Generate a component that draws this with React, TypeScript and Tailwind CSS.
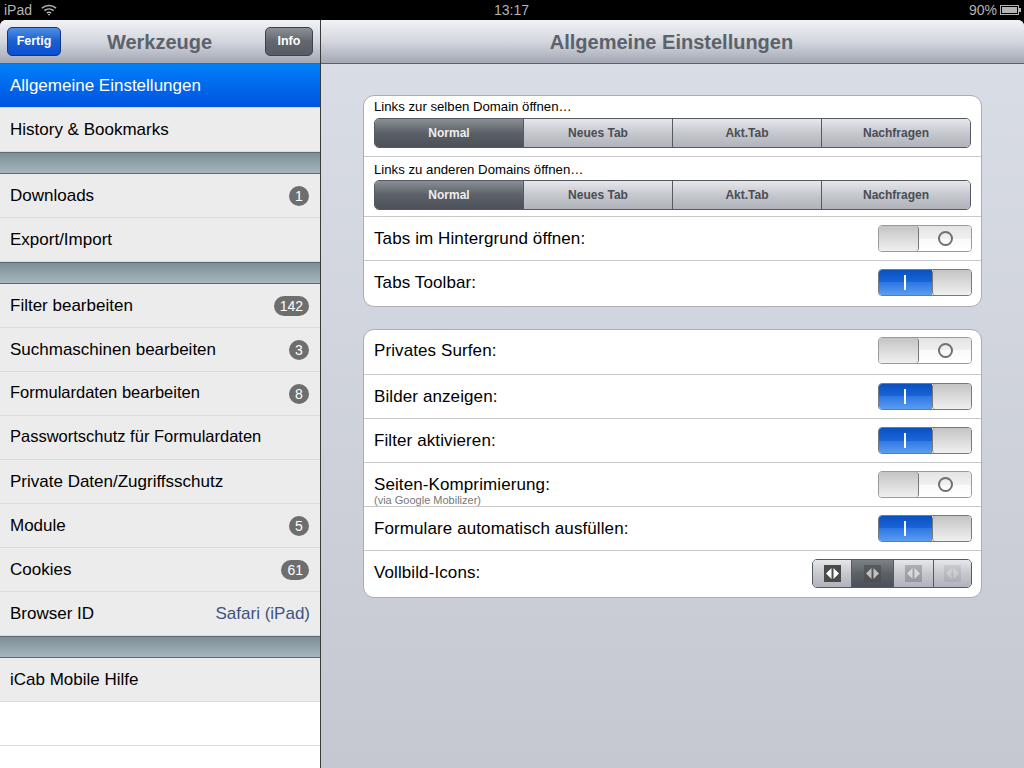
import React from 'react';

const navBg = 'bg-[linear-gradient(#f2f3f6,#d3d6dd_50%,#a3a8b4)]';

function Wifi() {
  return (
    <svg width="16" height="12" viewBox="0 0 16 12" fill="none" stroke="#b4b4b4" strokeWidth="1.6">
      <path d="M1 4.2C5 .6 11 .6 15 4.2" />
      <path d="M3.4 6.7c2.7-2.3 6.5-2.3 9.2 0" />
      <path d="M5.9 9c1.3-.9 2.9-.9 4.2 0" />
      <path d="M8 11.8 6.8 10.3c.7-.4 1.7-.4 2.4 0z" fill="#b4b4b4" stroke="none" />
    </svg>
  );
}

function Battery() {
  return (
    <svg width="21" height="10" viewBox="0 0 21 10">
      <rect x="0.5" y="0.5" width="18" height="9" fill="none" stroke="#b4b4b4" />
      <rect x="2" y="2" width="15" height="6" fill="#b4b4b4" />
      <rect x="19" y="3" width="2" height="4" fill="#b4b4b4" />
    </svg>
  );
}

function StatusBar() {
  return (
    <div className="h-5 bg-black text-[#b4b4b4] text-[14px] leading-5 grid grid-cols-3 pl-1 pr-[3px]">
      <div className="flex items-center gap-[9px]">
        <span>iPad</span>
        <Wifi />
      </div>
      <div className="text-center pr-[2px]">13:17</div>
      <div className="flex items-center justify-end gap-[3px]">
        <span>90%</span>
        <Battery />
      </div>
    </div>
  );
}

type RowProps = { label?: string; badge?: string; value?: string; selected?: boolean; plain?: boolean; tight?: boolean };

function Row({ label, badge, value, selected, plain, tight }: RowProps) {
  return (
    <div
      className={`h-11 shrink-0 flex items-center justify-between pl-2.5 pr-2.5 border-b text-[17px] ${
        selected
          ? 'bg-[linear-gradient(#0180f8,#0052e0)] text-white border-[#d8d8d8]'
          : plain
            ? 'bg-white border-[#dcdcdc] text-black'
            : 'bg-[#ececec] border-[#dcdcdc] text-black'
      }`}
    >
      <span className={tight ? 'text-[16.5px] -mt-0.5' : ''}>{label}</span>
      {badge && (
        <span className="h-5 min-w-5 px-1.5 rounded-full bg-[#6e6e6e] text-white text-[14px] leading-5 text-center mr-px">{badge}</span>
      )}
      {value && <span className="text-[#3d5380]">{value}</span>}
    </div>
  );
}

function Section() {
  return <div className="h-[22px] shrink-0 border-y border-y-[#5e6a72] bg-[linear-gradient(#7d8e99,#a8b6bd)]" />;
}

function NavButton({ label, blue }: { label: string; blue?: boolean }) {
  return (
    <button
      className={`h-[29px] rounded-[5px] border text-white text-[12.5px] font-bold ${
        blue
          ? 'w-[54px] border-[#12377c] bg-[linear-gradient(#4f8ee6,#1a5ed0_50%,#0a4fd0)]'
          : 'w-12 border-[#3f444c] bg-[linear-gradient(#8b9097,#62676f_50%,#565b64)]'
      }`}
    >
      {label}
    </button>
  );
}

function Segmented({ selected = 0 }: { selected?: number }) {
  const items = ['Normal', 'Neues Tab', 'Akt.Tab', 'Nachfragen'];
  return (
    <div className="h-[30px] flex rounded-[5px] border border-[#555a62] overflow-hidden text-[12px] font-bold">
      {items.map((item, i) => (
        <div
          key={item}
          className={`flex-1 flex items-center justify-center ${i > 0 ? 'border-l border-l-[#555a62]' : ''} ${
            i === selected
              ? 'bg-[linear-gradient(#8a8f95,#5c6168_50%,#4c5159)] text-[#eeeeee]'
              : 'bg-[linear-gradient(#e6e7ea,#c6c8ce_50%,#b0b3bb)] text-[#4a4d55]'
          }`}
        >
          {item}
        </div>
      ))}
    </div>
  );
}

function Toggle({ on }: { on?: boolean }) {
  if (on) {
    return (
      <div className="w-[94px] h-[27px] flex rounded-[4px] border border-[#6f7a8a] overflow-hidden">
        <div className="w-[53px] flex items-center justify-center pr-0.5 bg-[linear-gradient(#0a50c0,#1a66d8_50%,#2d78e4_50%,#5a9cf0)]">
          <div className="w-0.5 h-[15px] bg-white" />
        </div>
        <div className="flex-1 rounded-l-[3px] border-l border-l-[#777777] bg-[linear-gradient(#c4c4c4,#f0f0f0)]" />
      </div>
    );
  }
  return (
    <div className="w-[94px] h-[27px] flex rounded-[4px] border border-[#9a9a9a] overflow-hidden">
      <div className="w-10 rounded-r-[3px] border-r border-r-[#777777] bg-[linear-gradient(#c4c4c4,#f0f0f0)]" />
      <div className="flex-1 flex items-center justify-center bg-[linear-gradient(#e4e4e4,#f0f0f0_50%,#fafafa_50%,#ffffff)]">
        <div className="w-[15px] h-[15px] rounded-full border-2 border-[#707070]" />
      </div>
    </div>
  );
}

function Arrows({ opacity }: { opacity: string }) {
  return (
    <svg width="17" height="17" viewBox="0 0 17 17" className={opacity}>
      <rect width="17" height="17" fill="#4a4a4a" />
      <path d="M7.5 3v11L2 8.5zM9.5 3v11L15 8.5z" fill="#ffffff" />
    </svg>
  );
}

function IconSegments() {
  return (
    <div className="w-[160px] h-[29px] flex rounded-[5px] border border-[#555a62] overflow-hidden">
      <div className="w-[38px] flex items-center justify-center bg-[linear-gradient(#e6e7ea,#c6c8ce_50%,#b0b3bb)]">
        <Arrows opacity="" />
      </div>
      <div className="w-[42px] flex items-center justify-center border-l border-l-[#555a62] bg-[linear-gradient(#7d8288,#5c6168_50%,#4c5159)]">
        <Arrows opacity="opacity-60" />
      </div>
      <div className="w-[40px] flex items-center justify-center border-l border-l-[#555a62] bg-[linear-gradient(#e6e7ea,#c6c8ce_50%,#b0b3bb)]">
        <Arrows opacity="opacity-30" />
      </div>
      <div className="flex-1 flex items-center justify-center border-l border-l-[#555a62] bg-[linear-gradient(#e6e7ea,#c6c8ce_50%,#b0b3bb)]">
        <Arrows opacity="opacity-10" />
      </div>
    </div>
  );
}

function SettingRow({ label, sub, h = 'h-11', last, children }: { label: string; sub?: string; h?: string; last?: boolean; children: React.ReactNode }) {
  return (
    <div className={`${h} flex items-center justify-between pl-2.5 pr-[9px] ${last ? '' : 'border-b border-b-[#c8c8c8]'}`}>
      <div className="relative text-[17px] tracking-[0.1px] text-black">
        {label}
        {sub && <div className="absolute left-0 top-[20px] text-[11px] tracking-normal whitespace-nowrap text-[#777777]">{sub}</div>}
      </div>
      {children}
    </div>
  );
}

function SegmentRow({ label, h, labelH }: { label: string; h: string; labelH: string }) {
  return (
    <div className={`${h} px-2.5 border-b border-b-[#c8c8c8]`}>
      <div className={`${labelH} text-[13.2px] text-black`}>{label}</div>
      <Segmented />
    </div>
  );
}

function Card({ children }: { children: React.ReactNode }) {
  return <div className="w-[619px] bg-white rounded-[11px] border border-[#a9adb5] overflow-hidden">{children}</div>;
}

export default function App() {
  return (
    <div className="w-[1024px] h-[768px] overflow-hidden bg-black flex flex-col font-['Liberation_Sans',sans-serif]">
      <StatusBar />
      <div className="flex-1 min-h-0 flex rounded-t-[6px] overflow-hidden">
        <div className="w-[321px] shrink-0 flex flex-col border-r border-r-[#3a3a3a] bg-white overflow-hidden">
          <div className={`h-11 shrink-0 flex items-center justify-between px-[7px] border-b border-b-[#5a5f68] ${navBg}`}>
            <NavButton label="Fertig" blue />
            <span className="text-[20px] font-bold text-[#5b626c] pr-[7px]">Werkzeuge</span>
            <NavButton label="Info" />
          </div>
          <Row label="Allgemeine Einstellungen" selected />
          <Row label="History & Bookmarks" />
          <Section />
          <Row label="Downloads" badge="1" />
          <Row label="Export/Import" />
          <Section />
          <Row label="Filter bearbeiten" badge="142" />
          <Row label="Suchmaschinen bearbeiten" badge="3" />
          <Row label="Formulardaten bearbeiten" badge="8" tight />
          <Row label="Passwortschutz für Formulardaten" tight />
          <Row label="Private Daten/Zugriffsschutz" />
          <Row label="Module" badge="5" />
          <Row label="Cookies" badge="61" />
          <Row label="Browser ID" value="Safari (iPad)" />
          <Section />
          <Row label="iCab Mobile Hilfe" />
          <Row plain />
        </div>
        <div className="flex-1 min-w-0 flex flex-col bg-[linear-gradient(#dadee7,#c5c8d1)]">
          <div className={`h-11 shrink-0 flex items-center justify-center border-b border-b-[#5a5f68] text-[20px] font-bold text-[#5b626c] pr-0.5 ${navBg}`}>
            Allgemeine Einstellungen
          </div>
          <div className="pt-[31px] pl-[42px] flex flex-col gap-[22px]">
            <Card>
              <SegmentRow label="Links zur selben Domain öffnen…" h="h-[61px]" labelH="h-[22px] leading-[22px]" />
              <SegmentRow label="Links zu anderen Domains öffnen…" h="h-[60px]" labelH="h-[23px] leading-[25px]" />
              <SettingRow label="Tabs im Hintergrund öffnen:">
                <Toggle />
              </SettingRow>
              <SettingRow label="Tabs Toolbar:" h="h-[45px] pb-[2px]" last>
                <Toggle on />
              </SettingRow>
            </Card>
            <Card>
              <SettingRow label="Privates Surfen:" h="h-[45px] pb-[3px]">
                <Toggle />
              </SettingRow>
              <SettingRow label="Bilder anzeigen:">
                <Toggle on />
              </SettingRow>
              <SettingRow label="Filter aktivieren:">
                <Toggle on />
              </SettingRow>
              <SettingRow label="Seiten-Komprimierung:" sub="(via Google Mobilizer)">
                <Toggle />
              </SettingRow>
              <SettingRow label="Formulare automatisch ausfüllen:">
                <Toggle on />
              </SettingRow>
              <SettingRow label="Vollbild-Icons:" h="h-[46px] pb-[2px]" last>
                <IconSegments />
              </SettingRow>
            </Card>
          </div>
        </div>
      </div>
    </div>
  );
}
